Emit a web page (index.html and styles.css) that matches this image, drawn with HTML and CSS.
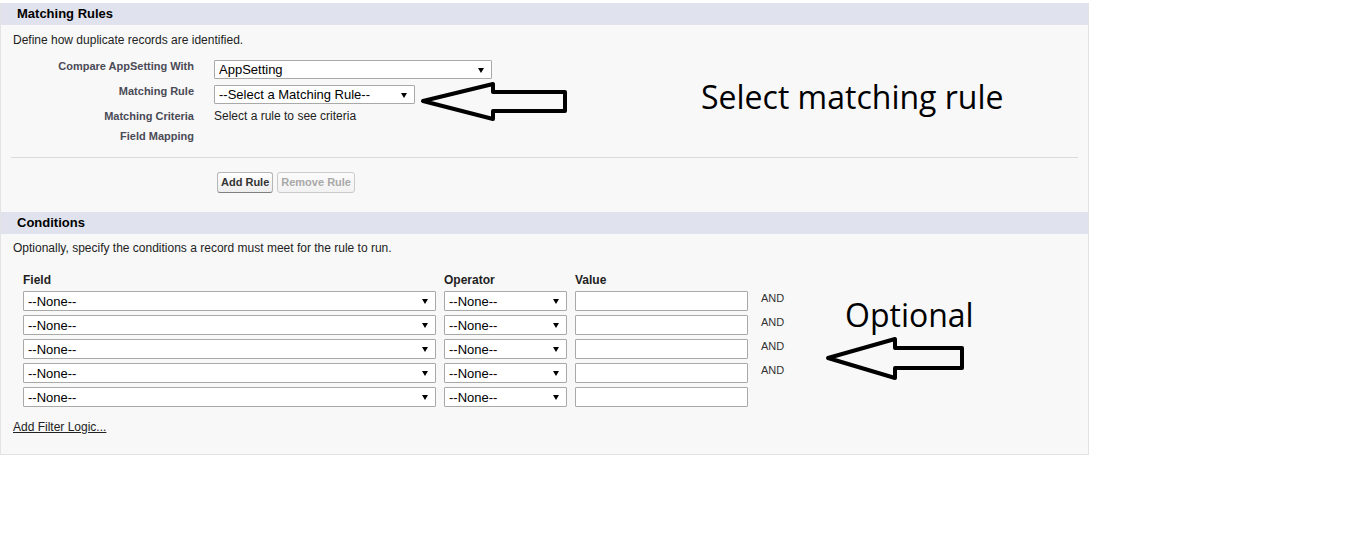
FILE: index.html
```html
<!DOCTYPE html>
<html lang="en">

<head>
    <meta charset="UTF-8">
    <meta name="viewport" content="width=device-width, initial-scale=1.0">
    <title>Duplicate Rule - Matching Rules</title>
    <link rel="stylesheet" href="styles.css">
</head>

<body>
    <div class="page">
        <div class="panel">
            <h3 class="section-head">Matching Rules</h3>
            <div class="section-body rules">
                <p class="section-desc">Define how duplicate records are identified.</p>
                <div class="rule-grid">
                    <div class="label">Compare AppSetting With</div>
                    <div class="value">
                        <span class="select-wrap">
                            <select class="select compare-select">
                                <option>AppSetting</option>
                            </select>
                        </span>
                    </div>
                    <div class="label">Matching Rule</div>
                    <div class="value">
                        <span class="select-wrap">
                            <select class="select rule-select">
                                <option>--Select a Matching Rule--</option>
                            </select>
                        </span>
                    </div>
                    <div class="label">Matching Criteria</div>
                    <div class="value text-value">Select a rule to see criteria</div>
                    <div class="label">Field Mapping</div>
                    <div class="value"></div>
                </div>
                <hr class="divider">
                <div class="btn-row">
                    <button class="btn">Add Rule</button>
                    <button class="btn" disabled>Remove Rule</button>
                </div>
            </div>

            <h3 class="section-head">Conditions</h3>
            <div class="section-body conditions">
                <p class="section-desc">Optionally, specify the conditions a record must meet for the rule to run.</p>
                <div class="criteria">
                    <div class="col-head">Field</div>
                    <div class="col-head">Operator</div>
                    <div class="col-head">Value</div>
                    <div></div>

                    <span class="select-wrap"><select class="select field-select"><option>--None--</option></select></span>
                    <span class="select-wrap"><select class="select op-select"><option>--None--</option></select></span>
                    <input type="text" class="value-input">
                    <div class="join">AND</div>

                    <span class="select-wrap"><select class="select field-select"><option>--None--</option></select></span>
                    <span class="select-wrap"><select class="select op-select"><option>--None--</option></select></span>
                    <input type="text" class="value-input">
                    <div class="join">AND</div>

                    <span class="select-wrap"><select class="select field-select"><option>--None--</option></select></span>
                    <span class="select-wrap"><select class="select op-select"><option>--None--</option></select></span>
                    <input type="text" class="value-input">
                    <div class="join">AND</div>

                    <span class="select-wrap"><select class="select field-select"><option>--None--</option></select></span>
                    <span class="select-wrap"><select class="select op-select"><option>--None--</option></select></span>
                    <input type="text" class="value-input">
                    <div class="join">AND</div>

                    <span class="select-wrap"><select class="select field-select"><option>--None--</option></select></span>
                    <span class="select-wrap"><select class="select op-select"><option>--None--</option></select></span>
                    <input type="text" class="value-input">
                    <div class="join"></div>
                </div>
                <a href="#" class="filter-link">Add Filter Logic...</a>
            </div>
        </div>

        <div class="note note-rule">Select matching rule</div>
        <div class="note note-optional">Optional</div>

        <svg class="arrows" width="1360" height="547" viewBox="0 0 1360 547">
            <polygon points="423,101 493,84 493,92 565,92 565,111 493,111 493,119" />
            <polygon points="828,358 895,339 895,348 962,348 962,368 895,368 895,378" />
        </svg>
    </div>
</body>

</html>
```

FILE: styles.css
```css
body {
    margin: 0;
    font-family: "Liberation Sans", Arial, sans-serif;
    font-size: 12px;
    color: #222;
    background: #fff;
}

.page {
    position: relative;
    width: 1360px;
    height: 547px;
    overflow: hidden;
}

.panel {
    margin-top: 3px;
    width: 1087px;
    background: #f8f8f8;
    border-left: 1px solid #e3e3e3;
    border-right: 1px solid #e3e3e3;
    border-bottom: 1px solid #e3e3e3;
}

.section-head {
    margin: 0;
    height: 22px;
    line-height: 22px;
    padding-left: 16px;
    background: #e0e3ed;
    font-size: 13px;
    font-weight: bold;
    color: #000;
}

.section-body.rules {
    padding: 8px 0 19px;
}

.section-body.conditions {
    padding: 7px 0 20px;
}

.section-desc {
    margin: 0 0 12px 12px;
    line-height: 14px;
}

.rule-grid {
    display: grid;
    grid-template-columns: 193px 1fr;
    column-gap: 20px;
    row-gap: 5px;
    align-items: start;
}

.rule-grid .label {
    text-align: right;
    font-size: 11px;
    font-weight: bold;
    line-height: 14px;
    color: #4a4a56;
}

.rule-grid .value .select-wrap {
    margin-top: 1px;
}

.rule-grid .text-value {
    line-height: 14px;
    padding-bottom: 1px;
}

.select-wrap {
    position: relative;
    display: inline-block;
    vertical-align: top;
}

.select-wrap::after {
    content: "";
    position: absolute;
    right: 8px;
    top: 50%;
    margin-top: -2px;
    border-left: 3px solid transparent;
    border-right: 3px solid transparent;
    border-top: 5px solid #000;
    pointer-events: none;
}

.select {
    -webkit-appearance: none;
    appearance: none;
    display: block;
    box-sizing: border-box;
    height: 20px;
    margin: 0;
    padding: 0 18px 0 4px;
    border: 1px solid #a9a9a9;
    border-radius: 1px;
    background: #fff;
    font-family: "Liberation Sans", Arial, sans-serif;
    font-size: 13px;
    color: #000;
}

.compare-select {
    width: 278px;
    height: 19px;
}

.rule-select {
    width: 201px;
    height: 19px;
}

.divider {
    margin: 14px 10px;
    border: 0;
    border-top: 1px solid #dadada;
}

.btn-row {
    display: flex;
    gap: 4px;
    padding-left: 216px;
}

.btn {
    margin: 0;
    padding: 2px 3px;
    font-family: "Liberation Sans", Arial, sans-serif;
    font-size: 11px;
    font-weight: bold;
    line-height: 15px;
    color: #333;
    background: linear-gradient(#ffffff, #ededed);
    border: 1px solid #b5b5b5;
    border-bottom-color: #7f7f7f;
    border-radius: 3px;
    cursor: pointer;
}

.btn:disabled {
    color: #a8a8a8;
    border-color: #cbcbcb;
    background: linear-gradient(#fbfbfb, #f2f2f2);
    cursor: default;
}

.criteria {
    display: grid;
    grid-template-columns: 413px 123px 173px auto;
    column-gap: 8px;
    row-gap: 4px;
    margin: 18px 0 0 22px;
    align-items: start;
}

.col-head {
    font-weight: bold;
    line-height: 14px;
    color: #222;
}

.field-select {
    width: 413px;
}

.op-select {
    width: 123px;
}

.value-input {
    box-sizing: border-box;
    width: 173px;
    height: 20px;
    margin: 0;
    border: 1px solid #a9a9a9;
    border-radius: 1px;
    background: #fff;
    font-family: "Liberation Sans", Arial, sans-serif;
    font-size: 13px;
}

.join {
    margin-left: 5px;
    font-size: 11px;
    line-height: 14px;
    color: #333;
}

.filter-link {
    display: inline-block;
    margin: 13px 0 0 12px;
    line-height: 14px;
    color: #222;
    text-decoration: underline;
}

.note {
    position: absolute;
    font-family: "Open Sans", sans-serif;
    font-size: 32px;
    line-height: 32px;
    color: #000;
    white-space: nowrap;
}

.note-rule {
    left: 701px;
    top: 81px;
}

.note-optional {
    left: 845px;
    top: 299px;
}

.arrows {
    position: absolute;
    left: 0;
    top: 0;
    pointer-events: none;
}

.arrows polygon {
    fill: none;
    stroke: #000;
    stroke-width: 4;
    stroke-linejoin: round;
}
```
